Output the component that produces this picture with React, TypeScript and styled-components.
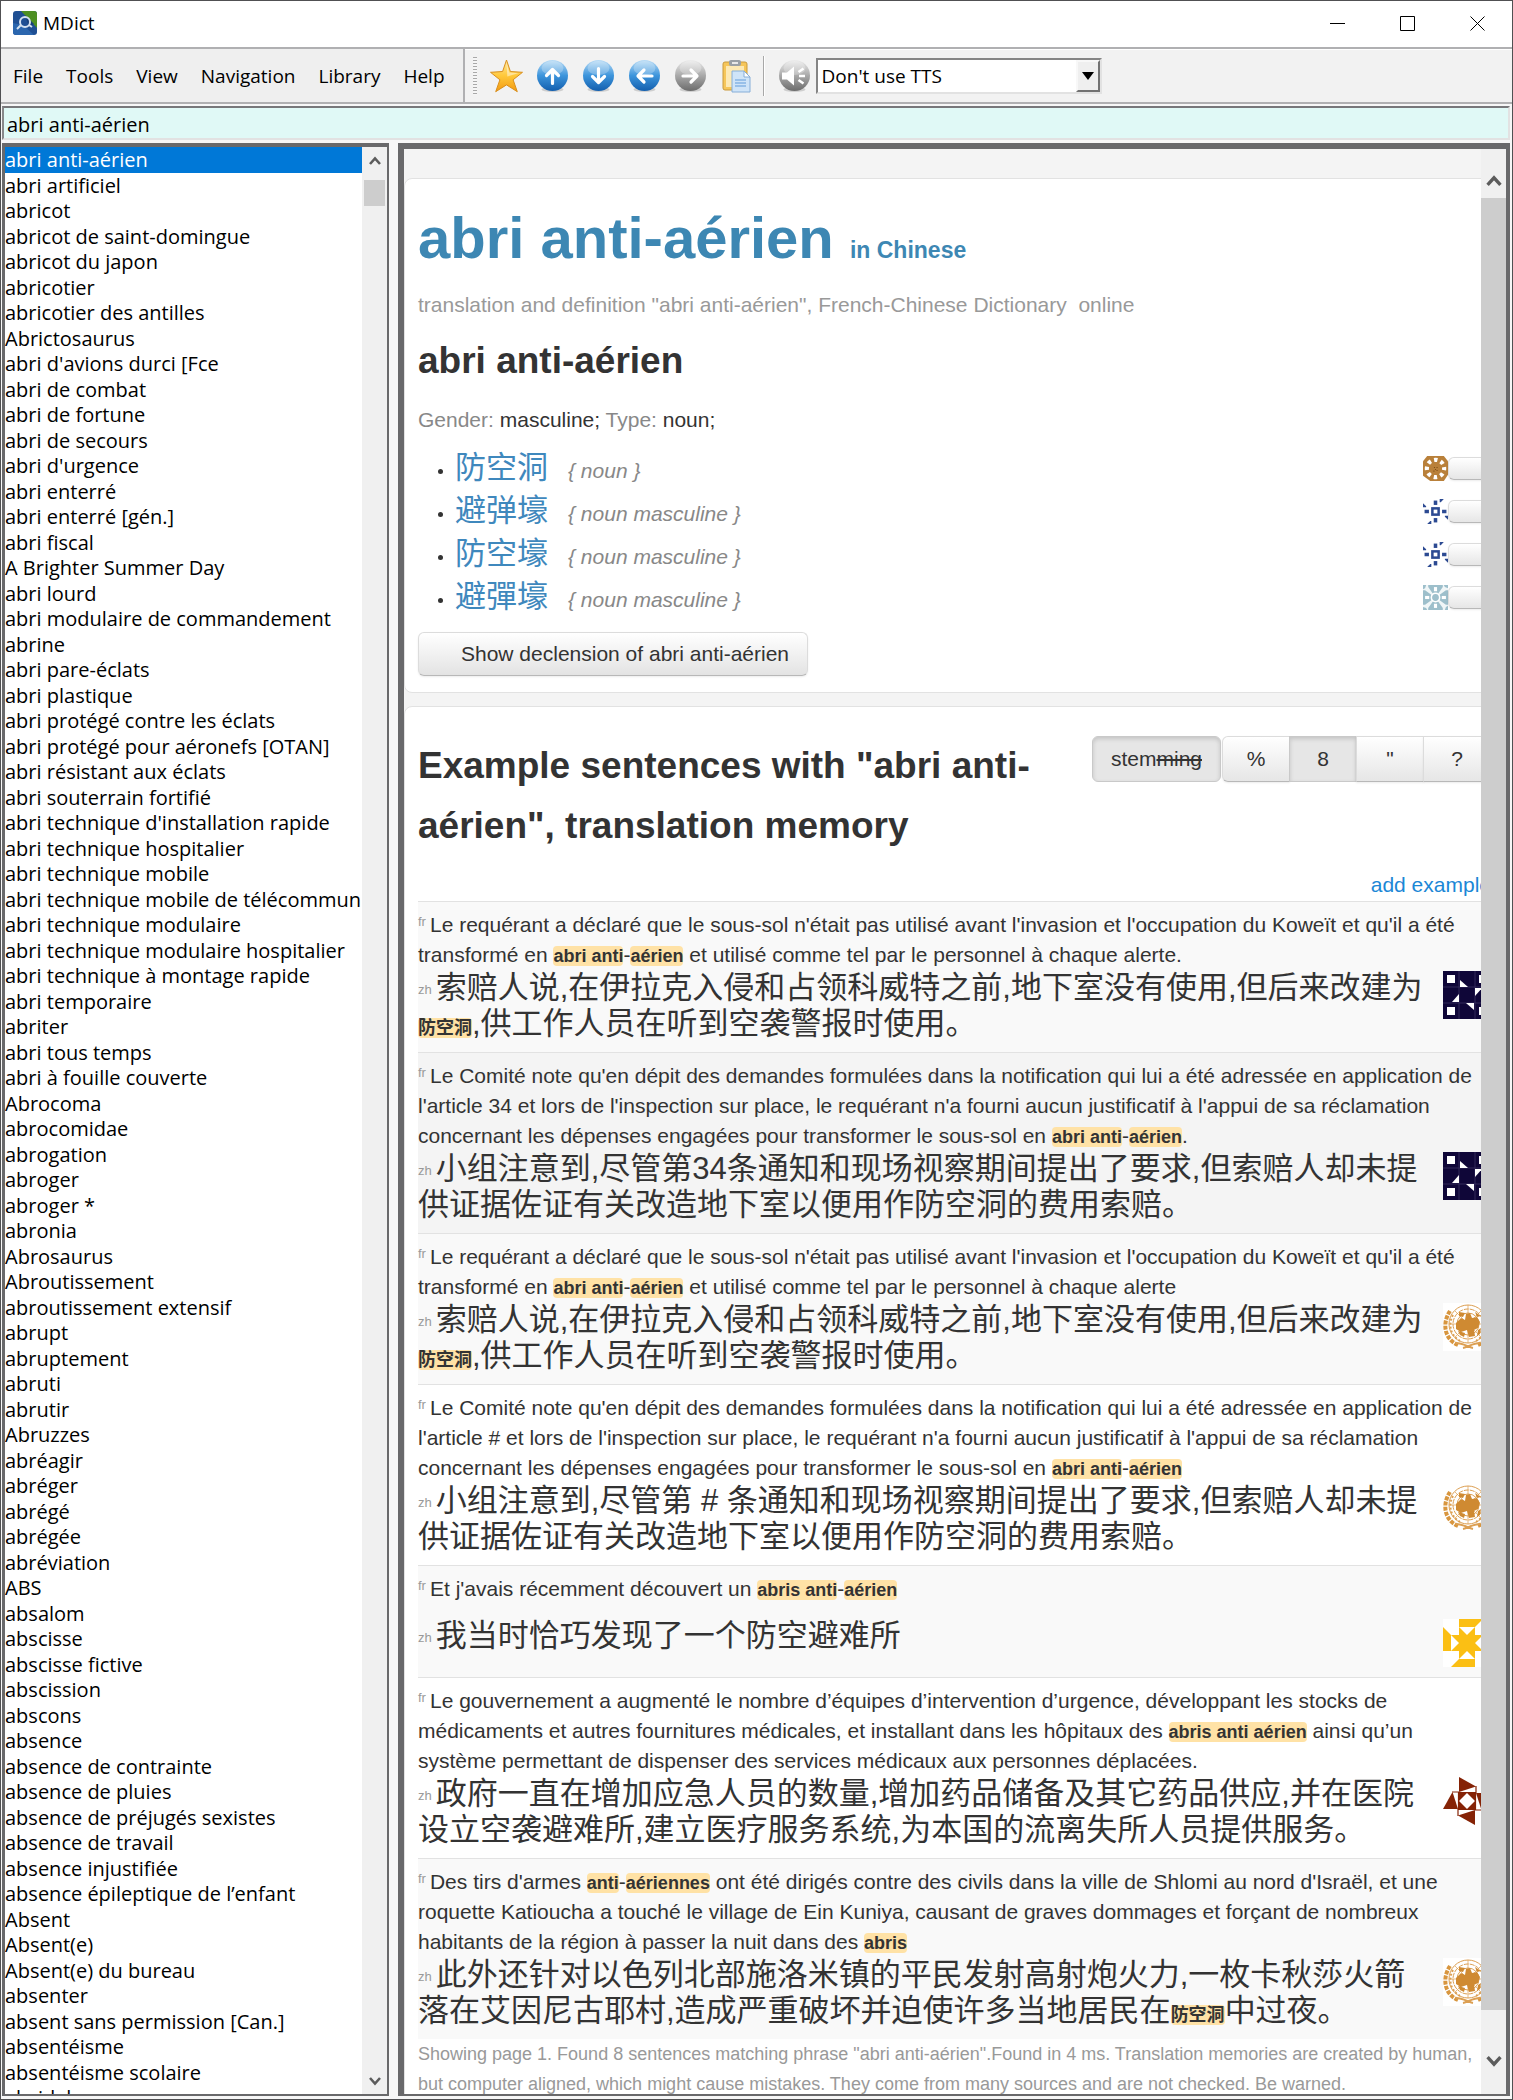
import React from 'react';
import styled, { createGlobalStyle, css } from 'styled-components';

const UI = `'Open Sans', 'Noto Sans', 'Noto Sans CJK SC', sans-serif`;
const BODY = `'Liberation Sans', Arial, 'Noto Sans CJK SC', sans-serif`;

const GlobalStyle = createGlobalStyle`
  * { box-sizing: border-box; }
  body { margin: 0; background: #f0f0f0; }
  button, input, select { font: inherit; color: inherit; margin: 0; }
  h1, h2, p, ul, menu { margin: 0; padding: 0; }
  ul { list-style: none; }
`;

/* ---------- window frame ---------- */

const Window = styled.div`
  display: flex;
  flex-direction: column;
  height: 100vh;
  border: 1px solid #505052;
  background: #f7f7f7;
  color: #000;
  font: 19px/24px ${UI};
  overflow: hidden;
`;

const TitleBar = styled.header`
  display: flex;
  align-items: center;
  flex: none;
  height: 46px;
  padding: 0 0 2px 12px;
  gap: 6px;
  background: #fff;
`;

const Title = styled.span`
  flex: 1;
`;

const Caption = styled.div`
  display: flex;
`;

const CaptionButton = styled.button`
  display: grid;
  place-items: center;
  width: 70px;
  height: 44px;
  padding: 0;
  border: 0;
  background: none;
`;

const CommandBar = styled.div`
  display: flex;
  flex: none;
  height: 57px;
  border-top: 2px solid #b0b0b2;
  border-bottom: 2px solid #b0b0b2;
  background: #f2f2f2;
  box-shadow: inset 0 1px #fff;
`;

const MenuBar = styled.nav`
  display: flex;
  align-items: center;
  gap: 23px;
  padding: 0 18px 0 12px;
  border-right: 2px solid #b0b0b2;
  background: #efefef;
`;

const MenuItem = styled.button`
  padding: 0;
  border: 0;
  background: none;
`;

const Toolbar = styled.div`
  display: flex;
  align-items: center;
  gap: 13px;
  padding-left: 8px;
`;

const Grip = styled.span`
  width: 4px;
  height: 38px;
  background: repeating-linear-gradient(#a8a8a8 0 1px, #f6f6f6 1px 3px);
`;

const ToolButton = styled.button`
  width: 33px;
  height: 34px;
  padding: 0;
  border: 0;
  background: none;
  svg { display: block; width: 33px; height: 34px; }
`;

const Divider = styled.span`
  width: 2px;
  height: 40px;
  margin-left: -3px;
  border-left: 1px solid #a8a8a8;
  border-right: 1px solid #fff;
`;

const TtsGroup = styled.div`
  display: flex;
  align-items: center;
  gap: 5px;
`;

const SelectBox = styled.label`
  position: relative;
  display: block;
  width: 286px;
  height: 36px;
`;

const Select = styled.select`
  width: 100%;
  height: 100%;
  padding: 0 30px 0 4px;
  appearance: none;
  border: 2px solid;
  border-color: #858585 #e2e2e2 #e2e2e2 #858585;
  border-radius: 0;
  background: #fff;
`;

const SelectArrow = styled.span`
  position: absolute;
  top: 2px;
  right: 2px;
  bottom: 2px;
  width: 24px;
  display: grid;
  place-items: center;
  border: 2px solid;
  border-color: #f8f8f8 #727272 #727272 #f8f8f8;
  background: #efefef;
  pointer-events: none;
`;

const SearchRow = styled.div`
  display: flex;
  flex: none;
  padding: 2px 2px 3px 1px;
`;

const SearchInput = styled.input`
  flex: 1;
  height: 34px;
  padding: 2px 3px 0;
  border: 2px solid;
  border-color: #77777a #e2e2e2 #e2e2e2 #88888a;
  outline: 0;
  background: #e0f9f6;
  font-size: 20px;
`;

const Panes = styled.main`
  display: flex;
  flex: 1;
  min-height: 0;
  padding: 0 2px 3px 1px;
  gap: 9px;
`;

/* ---------- word list ---------- */

const WordPane = styled.section`
  display: flex;
  flex: none;
  width: 387px;
  border: solid #69696b;
  border-width: 4px 2px 2px 3px;
  background: #fff;
`;

const WordList = styled.ul`
  flex: 1;
  min-width: 0;
  overflow: hidden;
  font-size: 20px;
`;

const Word = styled.li<{ $selected?: boolean }>`
  height: 26px;
  line-height: 26px;
  white-space: nowrap;
  overflow: hidden;
  color: ${p => (p.$selected ? '#fff' : '#000')};
  background: ${p => (p.$selected ? '#0078d7' : 'transparent')};
  &:nth-child(even) { height: 25px; }
`;

const ScrollTrack = styled.div`
  display: flex;
  flex: none;
  flex-direction: column;
  width: 25px;
  background: #f0f0f0;
`;

const ScrollButton = styled.button`
  display: grid;
  flex: none;
  place-items: center;
  height: 33px;
  padding: 0 0 6px;
  border: 0;
  background: none;
  &:last-child { padding: 6px 0 0; }
`;

const PageScrollButton = styled(ScrollButton)`
  height: 49px;
  padding: 14px 0 0;
  &:last-child {
    height: 84px;
    padding: 18px 0 0;
  }
`;

const ListThumb = styled.span`
  height: 26px;
  margin: 0 2px;
  background: #cdcdcd;
`;

const PageThumb = styled.span`
  flex: 1;
  background: #cdcdcd;
`;

const Spacer = styled.span`
  flex: 1;
`;

/* ---------- article ---------- */

const ArticlePane = styled.section`
  display: flex;
  flex: 1;
  min-width: 0;
  border: solid #69696b;
  border-width: 6px 4px 2px 6px;
  background: #f4f4f4;
`;

const Viewport = styled.div`
  flex: 1;
  min-width: 0;
  overflow: hidden;
  color: #333;
  font: 21px/30px ${BODY};
`;

/* The page is laid out a little wider than the viewport and is cut at the scrollbar. */
const Page = styled.div`
  display: flex;
  flex-direction: column;
  gap: 13px;
  margin-right: -25px;
  padding-top: 29px;
`;

const Card = styled.article`
  padding: 29px 14px 16px 13px;
  border: 1px solid #e2e2e2;
  border-radius: 8px;
  background: #fff;
`;

const Headword = styled.h1`
  color: #3d87b3;
  font-size: 58px;
  line-height: 60px;
  small { font-size: 23px; line-height: 1; }
`;

const Summary = styled.p`
  margin-top: 22px;
  color: #999;
  white-space: pre;
`;

const Heading = styled.h2`
  font-size: 37px;
  line-height: 60px;
`;

const EntryHeading = styled(Heading)`
  margin-top: 11px;
`;

const Grammar = styled.p`
  margin-top: 14px;
  color: #888;
  b { color: #333; font-weight: 400; }
`;

const Translations = styled.ul`
  margin: 12px 0 13px;
`;

const Translation = styled.li`
  display: flex;
  align-items: center;
  height: 43px;
  padding-left: 20px;
  line-height: 43px;
  &::before {
    content: '';
    width: 5px;
    height: 5px;
    margin: 6px 12px 0 0;
    border-radius: 50%;
    background: #333;
  }
`;

const Term = styled.p`
  flex: 1;
  a { color: #3f88bd; font-size: 31px; text-decoration: none; }
  i { margin-left: 20px; color: #888; }
`;

const glossy = css`
  border: 1px solid #dcdcdc;
  border-bottom-color: #b8b8b8;
  background: linear-gradient(#fff, #e6e6e6);
  box-shadow: 0 1px 2px rgba(0, 0, 0, 0.08);
`;

const VoteButton = styled.button`
  ${glossy}
  width: 43px;
  height: 23px;
  border-radius: 6px;
`;

const DeclensionButton = styled.button`
  ${glossy}
  height: 44px;
  padding: 0 18px 0 42px;
  border-radius: 6px;
  background: linear-gradient(#fff, #e3e3e3);
`;

const ExamplesHead = styled.div`
  display: flex;
  align-items: flex-start;
  justify-content: space-between;
`;

const Filters = styled.div`
  display: flex;
  flex: none;
`;

const Filter = styled.button<{ $on?: boolean; $alone?: boolean }>`
  ${glossy}
  height: 46px;
  min-width: 68px;
  margin-left: ${p => (p.$alone ? 0 : -1)}px;
  padding: 0 18px;
  border-radius: 0;
  ${p => p.$on && css`
    border-color: #c9c9c9;
    background: #e6e6e6;
    box-shadow: inset 0 2px 4px rgba(0, 0, 0, 0.15);
  `}
  ${p => p.$alone && css`
    margin-right: 2px;
    border-radius: 6px;
  `}
  &:nth-child(2) { border-radius: 6px 0 0 6px; }
  &:last-child { border-radius: 0 6px 6px 0; }
`;

const AddExample = styled.p`
  margin: 14px 0 1px;
  text-align: right;
  a { color: #1b87d6; text-decoration: none; }
`;

type Shade = 'plain' | 'stripe' | 'active';
const shades: Record<Shade, string> = { plain: '#fff', stripe: '#f9f9f9', active: '#f4f4f4' };

const Example = styled.section<{ $shade: Shade }>`
  padding: 8px 0 10px;
  border-top: 1px solid #e2e2e2;
  background: ${p => shades[p.$shade]};
`;

const Lang = styled.span<{ $raised?: boolean }>`
  margin-right: 4px;
  color: #999;
  font-size: 13px;
  line-height: 1;
  vertical-align: ${p => (p.$raised ? '6px' : '4px')};
`;

const TargetRow = styled.div<{ $single?: boolean }>`
  display: flex;
  align-items: ${p => (p.$single ? 'center' : 'flex-start')};
  gap: 10px;
  min-height: 63px;
  > svg {
    margin-top: 1px;
    align-self: ${p => (p.$single ? 'flex-end' : 'flex-start')};
  }
`;

const Target = styled.p`
  flex: 1;
  min-width: 0;
  font-size: 31px;
  line-height: 36px;
`;

const Hit = styled.mark`
  border-radius: 4px;
  background: #ffe2a6;
  color: #333;
  font-size: 18px;
  font-weight: 700;
  line-height: 1;
`;

const Footnote = styled.p`
  color: #999;
  font-size: 18px;
`;

/* ---------- drawings ---------- */

const AppIcon = () => (
  <svg width="24" height="24" viewBox="0 0 24 24" aria-hidden="true">
    <rect width="24" height="24" rx="3" fill="#1f4f93" />
    <path d="M8 0h13a3 3 0 0 1 3 3v14Z" fill="#4d8f22" />
    <path d="M0 12v9a3 3 0 0 0 3 3h18L10 14Z" fill="#2b66ae" />
    <path d="M12 4l9 9-5 3z" fill="#173f7a" />
    <circle cx="12" cy="11" r="5" fill="none" stroke="#d5e2f0" strokeWidth="2" />
    <path d="M8 14l-4 4M16 14l3 2" stroke="#d5e2f0" strokeWidth="2" />
  </svg>
);

const Star = () => (
  <svg viewBox="0 0 33 34" aria-hidden="true">
    <defs>
      <linearGradient id="star" x1="0" y1="0" x2="0" y2="1">
        <stop offset="0" stopColor="#ffe9a0" />
        <stop offset=".5" stopColor="#ffc83a" />
        <stop offset="1" stopColor="#f39a12" />
      </linearGradient>
    </defs>
    <path d="M16.500 1l3.900 11.500 12.100.8-9.400 7.500 4.200 11.900-10.800-6.800-10.800 6.800 4.200-11.900-9.400-7.500 12.100-.8z" fill="url(#star)" stroke="#d98f1d" strokeWidth="1" strokeLinejoin="round" />
    <path d="M16.500 4l2.800 9.500 9 .8-11 3.200z" fill="#fff" opacity=".45" />
  </svg>
);

const Orb = ({ id, blue, children }: { id: string; blue?: boolean; children: React.ReactNode }) => (
  <svg viewBox="0 0 33 34" aria-hidden="true">
    <defs>
      <linearGradient id={id} x1="0" y1="0" x2="0" y2="1">
        <stop offset="0" stopColor={blue ? '#b9dcf6' : '#ececec'} />
        <stop offset=".5" stopColor={blue ? '#3d95dc' : '#a9a9a9'} />
        <stop offset="1" stopColor={blue ? '#135fae' : '#6c6c6c'} />
      </linearGradient>
    </defs>
    <ellipse cx="16.500" cy="30.500" rx="11" ry="2.500" fill="#000" opacity=".15" />
    <circle cx="16.500" cy="16.500" r="15.500" fill={`url(#${id})`} />
    <ellipse cx="16.500" cy="9" rx="11" ry="7" fill="#fff" opacity=".25" />
    {children}
  </svg>
);

const OrbArrow = ({ turn }: { turn: number }) => (
  <path d="M16.500 24.500V11M10.500 16.500l6-6 6 6" transform={`rotate(${turn} 16.500 17)`} fill="none" stroke="#fff" strokeWidth="3.200" strokeLinecap="round" strokeLinejoin="round" />
);

const Paste = () => (
  <svg viewBox="0 0 33 34" aria-hidden="true">
    <rect x="3" y="3" width="24" height="28" rx="2" fill="#f6c65a" stroke="#c99a3c" />
    <rect x="6" y="7" width="18" height="21" fill="#fde9b4" />
    <rect x="9" y="1" width="12" height="6" rx="2" fill="#9aa0a6" />
    <rect x="12" y="3" width="6" height="2" fill="#e8e8e8" />
    <path d="M12 12h12l6 6v15H12z" fill="#cfe4f8" stroke="#86aed8" />
    <path d="M24 12v6h6z" fill="#fff" stroke="#86aed8" />
    <path d="M15 21h11M15 24h11M15 27h11" stroke="#86b4e4" strokeWidth="1.500" />
  </svg>
);

const Speaker = () => (
  <Orb id="orb-tts">
    <path d="M4 13.500h5l7-6v19l-7-6H4z" fill="#fff" />
    <path d="M20.500 13l5-3.500M21 17h6M20.500 21l5 3.500" stroke="#fff" strokeWidth="2.500" />
  </Orb>
);

const Chevron = ({ down, bold }: { down?: boolean; bold?: boolean }) => (
  <svg width={bold ? 18 : 14} height={bold ? 14 : 10} viewBox="0 0 14 10" aria-hidden="true">
    <path d={down ? 'M2 2l5 5.500L12 2' : 'M2 8l5-5.500L12 8'} fill="none" stroke="#5c5c5c" strokeWidth="2.600" />
  </svg>
);

const quarter = [0, 90, 180, 270];

const Gear = () => (
  <svg width="25" height="25" viewBox="0 0 24 24" aria-hidden="true">
    <path d="M4 0h16l4 5v13l-4 6H7l-7-5V5z" fill="#b9803a" />
    <circle cx="12" cy="12" r="8.300" fill="none" stroke="#fff" strokeWidth="4" strokeDasharray="3.300 3.220" strokeDashoffset="1.650" />
    <path d="M10.500 11h1M13 11h1M11.500 13h1M10 14.500h1M13 14h1" stroke="#7d4d17" />
  </svg>
);

const Spark = () => (
  <svg width="25" height="25" viewBox="0 0 24 24" aria-hidden="true">
    <rect x="9" y="9" width="6" height="6" fill="#fff" stroke="#2c4a92" strokeWidth="2.400" />
    {quarter.map(a => (
      <g key={a} transform={`rotate(${a} 12 12)`} fill="#2c4a92">
        <path d="M10.300 1.500h3.400v4.200h-3.400z" />
        <path d="M16 0h4l-3 3h-1z" />
      </g>
    ))}
  </svg>
);

const Quilt = () => (
  <svg width="25" height="25" viewBox="0 0 24 24" aria-hidden="true">
    <rect width="24" height="24" fill="#9dbfcb" />
    <circle cx="12" cy="12" r="4" fill="none" stroke="#fff" strokeWidth="1.500" />
    {quarter.map(a => (
      <g key={a} transform={`rotate(${a} 12 12)`} fill="#fff">
        <path d="M10.500 2h3v4h-3z" />
        <path d="M0 4l2-1 1-3 2 0 0 2 5 7-1 1-7-5-2 0z" opacity=".85" />
      </g>
    ))}
  </svg>
);

const Navy = () => (
  <svg width="48" height="48" viewBox="0 0 48 48" aria-hidden="true">
    <rect width="48" height="48" fill="#0f0638" />
    <path d="M16 0v48M32 0v48M0 16h48M0 32h48" stroke="#3b3263" strokeWidth=".8" />
    {quarter.map(a => (
      <g key={a} transform={`rotate(${a} 24 24)`} fill="#fff">
        <path d="M4 4h8v8H4z" />
        <path d="M17 9v7h8z" />
      </g>
    ))}
  </svg>
);

const Emblem = () => (
  <svg width="48" height="48" viewBox="0 0 48 48" aria-hidden="true">
    <rect width="48" height="48" fill="#fff" />
    <g fill="none" stroke="#dc9f52">
      <circle cx="25" cy="21" r="19" strokeWidth="1" />
      <circle cx="25" cy="21" r="15" strokeWidth="1" strokeDasharray="5 1" />
      <circle cx="25" cy="21" r="11" strokeWidth="1" />
      <path d="M25 2v38M6 21h38M12 8l26 26M38 8L12 34" strokeWidth=".7" />
      <path d="M7 8C-1 20 1 36 15 42M43 8c8 12 6 28-8 34" strokeWidth="4" strokeDasharray="4 1.200" stroke="#d8963f" />
      <path d="M10 12C5 21 7 32 17 38M40 12c5 9 3 20-7 26" strokeWidth="2" strokeDasharray="2 2" />
      <path d="M13 40c7 0 12 4 17 5M37 40c-7 0-12 4-17 5" strokeWidth="2" />
    </g>
    <path d="M13 20l5-5 4 2 1-6 4-1 2 5 5-1 3 5-2 6-4 2 1 6-6 1-2-7-6 2-5-3z M15 28l7 2-1 4-4-2z M16 9l6 1-2 4-4-1z M32 9l6 4-4 1z M35 27l3-2-1 6-3 2z" fill="#cf8a32" />
  </svg>
);

const Yellow = () => (
  <svg width="48" height="48" viewBox="0 0 48 48" aria-hidden="true">
    <rect width="48" height="48" fill="#fff" />
    <rect x="16" y="16" width="16" height="16" fill="#fbbf14" />
    {quarter.map(a => (
      <g key={a} transform={`rotate(${a} 24 24)`} fill="#fbbf14">
        <path d="M16 0h24l-8 8H16z" />
        <path d="M16 8l8 8h-8zM32 8l-8 8h8z" />
      </g>
    ))}
  </svg>
);

const Maroon = () => (
  <svg width="48" height="48" viewBox="0 0 48 48" aria-hidden="true">
    {quarter.map(a => (
      <g key={a} transform={`rotate(${a} 24 24)`} fill="#852306">
        <path d="M16 0l17 9.500L16 15z" />
        <path d="M16 16h8l-8 8z" />
        <path d="M33 9v7M16 15.500h17" stroke="#852306" strokeWidth="1.200" />
      </g>
    ))}
  </svg>
);

/* ---------- data ---------- */

const menus = ['File', 'Tools', 'View', 'Navigation', 'Library', 'Help'];

const words = `abri anti-aérien
abri artificiel
abricot
abricot de saint-domingue
abricot du japon
abricotier
abricotier des antilles
Abrictosaurus
abri d'avions durci [Fce
abri de combat
abri de fortune
abri de secours
abri d'urgence
abri enterré
abri enterré [gén.]
abri fiscal
A Brighter Summer Day
abri lourd
abri modulaire de commandement
abrine
abri pare-éclats
abri plastique
abri protégé contre les éclats
abri protégé pour aéronefs [OTAN]
abri résistant aux éclats
abri souterrain fortifié
abri technique d'installation rapide
abri technique hospitalier
abri technique mobile
abri technique mobile de télécommunications
abri technique modulaire
abri technique modulaire hospitalier
abri technique à montage rapide
abri temporaire
abriter
abri tous temps
abri à fouille couverte
Abrocoma
abrocomidae
abrogation
abroger
abroger *
abronia
Abrosaurus
Abroutissement
abroutissement extensif
abrupt
abruptement
abruti
abrutir
Abruzzes
abréagir
abréger
abrégé
abrégée
abréviation
ABS
absalom
abscisse
abscisse fictive
abscission
abscons
absence
absence de contrainte
absence de pluies
absence de préjugés sexistes
absence de travail
absence injustifiée
absence épileptique de l’enfant
Absent
Absent(e)
Absent(e) du bureau
absenter
absent sans permission [Can.]
absentéisme
absentéisme scolaire
absidal`.split('\n');

const translations = [
  { term: '防空洞', note: '{ noun }', icon: <Gear /> },
  { term: '避弹壕', note: '{ noun masculine }', icon: <Spark /> },
  { term: '防空壕', note: '{ noun masculine }', icon: <Spark /> },
  { term: '避彈壕', note: '{ noun masculine }', icon: <Quilt /> },
];

/* Words between asterisks are search hits. */
const examples: { fr: string; zh: string; shade: Shade; icon: React.ReactNode; single?: boolean }[] = [
  {
    fr: "Le requérant a déclaré que le sous-sol n'était pas utilisé avant l'invasion et l'occupation du Koweït et qu'il a été transformé en *abri anti*-*aérien* et utilisé comme tel par le personnel à chaque alerte.",
    zh: '索赔人说,在伊拉克入侵和占领科威特之前,地下室没有使用,但后来改建为*防空洞*,供工作人员在听到空袭警报时使用。',
    shade: 'stripe',
    icon: <Navy />,
  },
  {
    fr: "Le Comité note qu'en dépit des demandes formulées dans la notification qui lui a été adressée en application de l'article 34 et lors de l'inspection sur place, le requérant n'a fourni aucun justificatif à l'appui de sa réclamation concernant les dépenses engagées pour transformer le sous-sol en *abri anti*-*aérien*.",
    zh: '小组注意到,尽管第34条通知和现场视察期间提出了要求,但索赔人却未提供证据佐证有关改造地下室以便用作防空洞的费用索赔。',
    shade: 'active',
    icon: <Navy />,
  },
  {
    fr: "Le requérant a déclaré que le sous-sol n'était pas utilisé avant l'invasion et l'occupation du Koweït et qu'il a été transformé en *abri anti*-*aérien* et utilisé comme tel par le personnel à chaque alerte",
    zh: '索赔人说,在伊拉克入侵和占领科威特之前,地下室没有使用,但后来改建为*防空洞*,供工作人员在听到空袭警报时使用。',
    shade: 'stripe',
    icon: <Emblem />,
  },
  {
    fr: "Le Comité note qu'en dépit des demandes formulées dans la notification qui lui a été adressée en application de l'article # et lors de l'inspection sur place, le requérant n'a fourni aucun justificatif à l'appui de sa réclamation concernant les dépenses engagées pour transformer le sous-sol en *abri anti*-*aérien*",
    zh: '小组注意到,尽管第 # 条通知和现场视察期间提出了要求,但索赔人却未提供证据佐证有关改造地下室以便用作防空洞的费用索赔。',
    shade: 'plain',
    icon: <Emblem />,
  },
  {
    fr: "Et j'avais récemment découvert un *abris anti*-*aérien*",
    zh: '我当时恰巧发现了一个防空避难所',
    shade: 'stripe',
    icon: <Yellow />,
    single: true,
  },
  {
    fr: 'Le gouvernement a augmenté le nombre d’équipes d’intervention d’urgence, développant les stocks de médicaments et autres fournitures médicales, et installant dans les hôpitaux des *abris anti aérien* ainsi qu’un système permettant de dispenser des services médicaux aux personnes déplacées.',
    zh: '政府一直在增加应急人员的数量,增加药品储备及其它药品供应,并在医院设立空袭避难所,建立医疗服务系统,为本国的流离失所人员提供服务。',
    shade: 'plain',
    icon: <Maroon />,
  },
  {
    fr: "Des tirs d'armes *anti*-*aériennes* ont été dirigés contre des civils dans la ville de Shlomi au nord d'Israël, et une roquette Katioucha a touché le village de Ein Kuniya, causant de graves dommages et forçant de nombreux habitants de la région à passer la nuit dans des *abris*",
    zh: '此外还针对以色列北部施洛米镇的平民发射高射炮火力,一枚卡秋莎火箭落在艾因尼古耶村,造成严重破坏并迫使许多当地居民在*防空洞*中过夜。',
    shade: 'stripe',
    icon: <Emblem />,
  },
];

const Marked = ({ text }: { text: string }) => (
  <>{text.split('*').map((part, i) => (i % 2 ? <Hit key={i}>{part}</Hit> : part))}</>
);

export default function App() {
  return (
    <Window>
      <GlobalStyle />
      <TitleBar>
        <AppIcon />
        <Title>MDict</Title>
        <Caption>
          <CaptionButton aria-label="Minimize">
            <svg width="15" height="15"><path d="M0 7.500h15" stroke="#000" /></svg>
          </CaptionButton>
          <CaptionButton aria-label="Maximize">
            <svg width="15" height="15"><path d="M.5.5h14v14H.5z" fill="none" stroke="#000" /></svg>
          </CaptionButton>
          <CaptionButton aria-label="Close">
            <svg width="15" height="15"><path d="M.5.5l14 14M14.500.5l-14 14" stroke="#000" /></svg>
          </CaptionButton>
        </Caption>
      </TitleBar>

      <CommandBar>
        <MenuBar>
          {menus.map(m => <MenuItem key={m}>{m}</MenuItem>)}
        </MenuBar>
        <Toolbar>
          <Grip />
          <ToolButton aria-label="Favourite"><Star /></ToolButton>
          <ToolButton aria-label="Previous entry"><Orb id="orb-up" blue><OrbArrow turn={0} /></Orb></ToolButton>
          <ToolButton aria-label="Next entry"><Orb id="orb-down" blue><OrbArrow turn={180} /></Orb></ToolButton>
          <ToolButton aria-label="Back"><Orb id="orb-back" blue><OrbArrow turn={270} /></Orb></ToolButton>
          <ToolButton aria-label="Forward"><Orb id="orb-forward"><OrbArrow turn={90} /></Orb></ToolButton>
          <ToolButton aria-label="Paste"><Paste /></ToolButton>
          <Divider />
          <TtsGroup>
            <ToolButton aria-label="Speak"><Speaker /></ToolButton>
            <SelectBox>
              <Select aria-label="Text to speech" defaultValue="none">
                <option value="none">Don't use TTS</option>
              </Select>
              <SelectArrow>
                <svg width="12" height="8"><path d="M0 0h12L6 8z" /></svg>
              </SelectArrow>
            </SelectBox>
          </TtsGroup>
        </Toolbar>
      </CommandBar>

      <SearchRow>
        <SearchInput aria-label="Search" defaultValue="abri anti-aérien" />
      </SearchRow>

      <Panes>
        <WordPane>
          <WordList>
            {words.map((w, i) => <Word key={w} $selected={i === 0}>{w}</Word>)}
          </WordList>
          <ScrollTrack>
            <ScrollButton aria-label="Scroll list up"><Chevron /></ScrollButton>
            <ListThumb />
            <Spacer />
            <ScrollButton aria-label="Scroll list down"><Chevron down /></ScrollButton>
          </ScrollTrack>
        </WordPane>

        <ArticlePane>
          <Viewport>
            <Page>
              <Card>
                <Headword>abri anti-aérien <small>in Chinese</small></Headword>
                <Summary>{'translation and definition "abri anti-aérien", French-Chinese Dictionary  online'}</Summary>
                <EntryHeading>abri anti-aérien</EntryHeading>
                <Grammar>Gender: <b>masculine;</b> Type: <b>noun;</b></Grammar>
                <Translations>
                  {translations.map(t => (
                    <Translation key={t.term}>
                      <Term><a href="#term">{t.term}</a><i>{t.note}</i></Term>
                      {t.icon}
                      <VoteButton aria-label="Rate translation" />
                    </Translation>
                  ))}
                </Translations>
                <DeclensionButton>Show declension of abri anti-aérien</DeclensionButton>
              </Card>

              <Card>
                <ExamplesHead>
                  <Heading>Example sentences with "abri anti-aérien", translation memory</Heading>
                  <Filters>
                    <Filter $on $alone>stem<s>ming</s></Filter>
                    <Filter>%</Filter>
                    <Filter $on>8</Filter>
                    <Filter>"</Filter>
                    <Filter>?</Filter>
                  </Filters>
                </ExamplesHead>
                <AddExample><a href="#add">add example</a></AddExample>
                {examples.map((e, i) => (
                  <Example key={i} $shade={e.shade}>
                    <p><Lang $raised>fr</Lang><Marked text={e.fr} /></p>
                    <TargetRow $single={e.single}>
                      <Target lang="zh"><Lang>zh</Lang><Marked text={e.zh} /></Target>
                      {e.icon}
                    </TargetRow>
                  </Example>
                ))}
                <Footnote>
                  Showing page 1. Found 8 sentences matching phrase "abri anti-aérien".Found in 4 ms. Translation memories are
                  created by human, but computer aligned, which might cause mistakes. They come from many sources and are not
                  checked. Be warned.
                </Footnote>
              </Card>
            </Page>
          </Viewport>
          <ScrollTrack>
            <PageScrollButton aria-label="Scroll page up"><Chevron bold /></PageScrollButton>
            <PageThumb />
            <PageScrollButton aria-label="Scroll page down"><Chevron down bold /></PageScrollButton>
          </ScrollTrack>
        </ArticlePane>
      </Panes>
    </Window>
  );
}
